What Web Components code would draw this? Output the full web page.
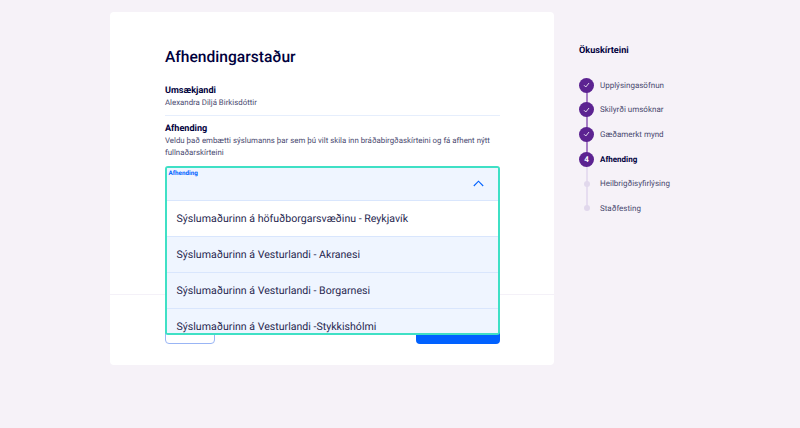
<!DOCTYPE html>
<html lang="is">
<head>
<meta charset="utf-8">
<title>Afhendingarstaður</title>
<style>
  html, body { margin: 0; height: 100%; }
  body {
    background: #f6f2f8;
    color: #00003c;
    font-family: Roboto, "Noto Sans", sans-serif;
    text-rendering: geometricPrecision;
    overflow: hidden;
  }
</style>
</head>
<body>
<app-shell>
  <form-card>
    <h-title slot="title">Afhendingarstaður</h-title>
    <info-block slot="body" label="Umsækjandi">Alexandra Diljá Birkisdóttir</info-block>
    <info-block slot="body" label="Afhending" class="last">Veldu það embætti sýslumanns þar sem þú vilt skila inn bráðabirgðaskírteini og fá afhent nýtt fullnaðarskírteini</info-block>
    <select-box slot="body" label="Afhending">
      <select-option>Sýslumaðurinn á höfuðborgarsvæðinu - Reykjavík</select-option>
      <select-option>Sýslumaðurinn á Vesturlandi - Akranesi</select-option>
      <select-option>Sýslumaðurinn á Vesturlandi - Borgarnesi</select-option>
      <select-option>Sýslumaðurinn á Vesturlandi -Stykkishólmi</select-option>
    </select-box>
  </form-card>
  <step-list title="Ökuskírteini">
    <step-item state="done">Upplýsingasöfnun</step-item>
    <step-item state="done">Skilyrði umsóknar</step-item>
    <step-item state="done">Gæðamerkt mynd</step-item>
    <step-item state="active" number="4">Afhending</step-item>
    <step-item>Heilbrigðisyfirlýsing</step-item>
    <step-item state="last">Staðfesting</step-item>
  </step-list>
</app-shell>

<script>
  /**
   * Two column page, form card and step list.
   */
  customElements.define('app-shell',
    class extends HTMLElement {
      constructor () {
        super()
        this.attachShadow({ mode: 'open' }).innerHTML = `
          <style>
            :host { display: flex; padding: 12px 0 0 110px; align-items: flex-start; }
          </style>
          <slot></slot>`
      }
    }
  )

  customElements.define('h-title',
    class extends HTMLElement {
      constructor () {
        super()
        this.attachShadow({ mode: 'open' }).innerHTML = `
          <style>
            :host { display: block; font-size: 15.6px; line-height: 22px; font-weight: 500; color: #00003c; }
          </style>
          <slot></slot>`
      }
    }
  )

  /**
   * White card, the buttons under the divider are part of the card itself.
   */
  customElements.define('form-card',
    class extends HTMLElement {
      constructor () {
        super()
        this.attachShadow({ mode: 'open' }).innerHTML = `
          <style>
            :host {
              display: flex;
              flex-direction: column;
              box-sizing: border-box;
              width: 444px;
              height: 353px;
              background: #fff;
              border-radius: 4px;
            }
            .main { flex: none; height: 282px; box-sizing: border-box; padding: 34px 54.5px 0 55px; position: relative; z-index: 1; }
            .title { margin-bottom: 17px; }
            .footer {
              flex: 1;
              box-sizing: border-box;
              border-top: 1px solid #f4f1f8;
              padding: 0 54.5px 21px 55px;
              display: flex;
              justify-content: space-between;
              align-items: flex-end;
            }
            .btn { height: 22px; box-sizing: border-box; border-radius: 4px; }
            .back { width: 50px; border: 1px solid #99b5f5; background: #fff; }
            .next { width: 84px; background: #0061ff; }
          </style>
          <div class="main">
            <div class="title"><slot name="title"></slot></div>
            <slot name="body"></slot>
          </div>
          <div class="footer">
            <div class="btn back"></div>
            <div class="btn next"></div>
          </div>`
      }
    }
  )

  customElements.define('info-block',
    class extends HTMLElement {
      constructor () {
        super()
        this.attachShadow({ mode: 'open' }).innerHTML = `
          <style>
            :host { display: block; font-size: 7.85px; line-height: 12.2px; color: #4a4a70; }
            :host(:not(.last)) { border-bottom: 1px solid #e6eefc; padding-bottom: 5.5px; margin-bottom: 7px; }
            :host(.last) { margin-bottom: 7px; }
            .label { font-size: 9.1px; line-height: 12px; font-weight: 700; color: #00003c; }
          </style>
          <div class="label"></div>
          <slot></slot>`
        this.shadowRoot.querySelector('.label').textContent = this.getAttribute('label')
      }
    }
  )

  /**
   * The open select, its menu hangs over the card footer and is cut off by the frame.
   */
  customElements.define('select-box',
    class extends HTMLElement {
      constructor () {
        super()
        this.attachShadow({ mode: 'open' }).innerHTML = `
          <style>
            :host { display: block; height: 168.5px; }
            .frame {
              height: 100%;
              box-sizing: border-box;
              border: 2px solid #3fe0c5;
              border-radius: 3px;
              background: #fff;
              overflow: hidden;
            }
            .head {
              height: 33px;
              box-sizing: border-box;
              background: #eff5ff;
              padding: 1px 14px 0 1.5px;
              border-bottom: 1px solid #d9e6fd;
              display: flex;
              justify-content: space-between;
            }
            .label { font-size: 6.3px; line-height: 9px; font-weight: 700; color: #0061ff; }
            svg { margin-top: 11px; }
          </style>
          <div class="frame">
            <div class="head">
              <span class="label"></span>
              <svg width="11" height="7" viewBox="0 0 11 7" fill="none" stroke="#0061ff" stroke-width="1.1"><path d="M.8 6 5.5 1.2 10.2 6"/></svg>
            </div>
            <slot></slot>
          </div>`
        this.shadowRoot.querySelector('.label').textContent = this.getAttribute('label')
      }
    }
  )

  customElements.define('select-option',
    class extends HTMLElement {
      constructor () {
        super()
        this.attachShadow({ mode: 'open' }).innerHTML = `
          <style>
            :host {
              display: flex;
              align-items: center;
              box-sizing: border-box;
              height: 36px;
              padding-left: 9.5px;
              font-size: 10.6px;
              color: #27274f;
              background: #eff5ff;
              border-bottom: 1px solid #d9e6fd;
            }
            :host(:first-child) { background: #fff; }
          </style>
          <slot></slot>`
      }
    }
  )

  customElements.define('step-list',
    class extends HTMLElement {
      constructor () {
        super()
        this.attachShadow({ mode: 'open' }).innerHTML = `
          <style>
            :host { display: block; margin-left: 25px; padding-top: 33px; }
            .title { font-size: 9.1px; line-height: 12px; font-weight: 700; color: #00003c; margin-bottom: 20.5px; }
          </style>
          <div class="title"></div>
          <slot></slot>`
        this.shadowRoot.querySelector('.title').textContent = this.getAttribute('title')
      }
    }
  )

  /**
   * One step. state is done, active, last or empty for a later step.
   */
  customElements.define('step-item',
    class extends HTMLElement {
      constructor () {
        super()
        const state = this.getAttribute('state') || 'todo'
        const done = state === 'done'
        const active = state === 'active'
        const check = '<svg width="7" height="6" viewBox="0 0 7 6" fill="none" stroke="#fff" stroke-width=".8"><path d="M1 3.2 2.8 5 6 1"/></svg>'
        this.attachShadow({ mode: 'open' }).innerHTML = `
          <style>
            :host { display: flex; height: 24.7px; align-items: flex-start; font-size: 8px; color: #4a4a70; }
            :host([state="active"]) { font-weight: 700; color: #00003c; }
            .rail { position: relative; width: 15px; height: 24.7px; display: flex; justify-content: center; margin-right: 6px; }
            .rail::after {
              content: "";
              position: absolute;
              top: 7px;
              height: 25px;
              left: 6.5px;
              width: 2px;
              background: ${done ? '#a77fc6' : '#e6ddf0'};
            }
            :host([state="last"]) .rail::after { display: none; }
            .dot {
              position: relative;
              z-index: 1;
              box-sizing: border-box;
              border-radius: 50%;
              display: flex;
              align-items: center;
              justify-content: center;
              color: #fff;
              font-size: 8px;
              font-weight: 700;
              width: ${done || active ? 15 : 6}px;
              height: ${done || active ? 15 : 6}px;
              margin-top: ${done || active ? 0 : 4.5}px;
              background: ${done || active ? '#5c2391' : '#e1d8ec'};
            }
            .text { line-height: 15px; }
          </style>
          <div class="rail"><div class="dot">${done ? check : (active ? this.getAttribute('number') : '')}</div></div>
          <div class="text"><slot></slot></div>`
      }
    }
  )
</script>
</body>
</html>
